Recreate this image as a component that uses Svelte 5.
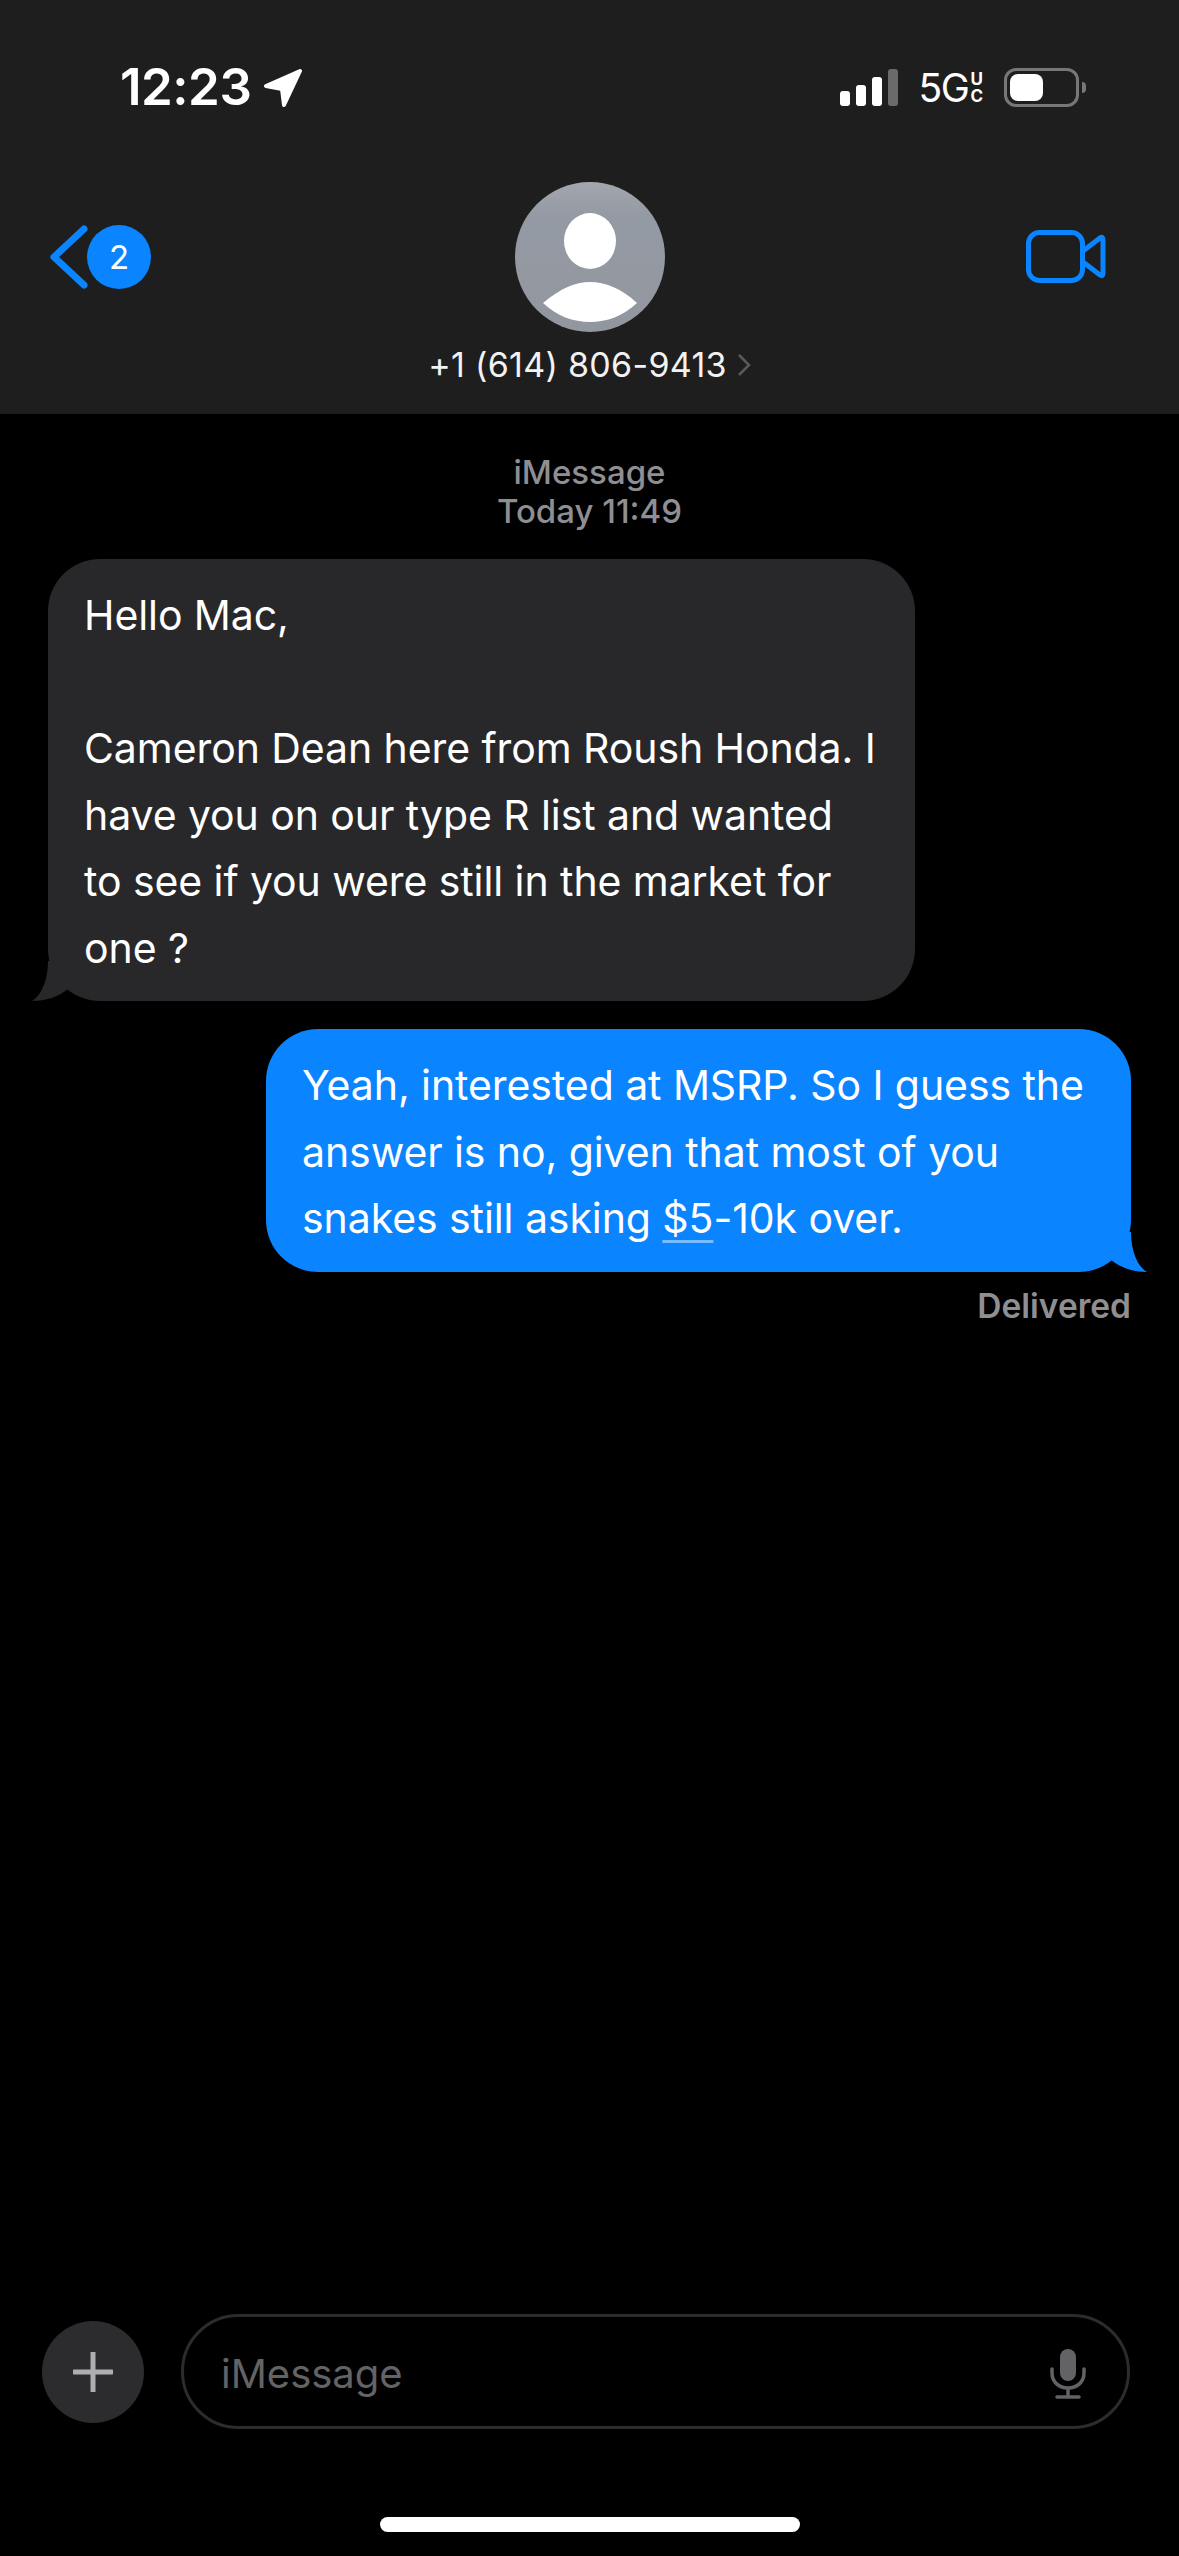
<script>
	const incoming = ['Hello Mac,', '', 'Cameron Dean here from Roush Honda. I', 'have you on our type R list and wanted', 'to see if you were still in the market for', 'one ?'];
	const signal = [15, 21, 29, 37];
</script>

<div class="screen">
	<header class="top">
		<div class="status">
			<div class="clock">
				<span>12:23</span>
				<svg width="39" height="38" viewBox="0 0 39 38"><path d="M37 2 L3 17 L19 20 L21 36 Z" fill="#fff" stroke="#fff" stroke-width="4" stroke-linejoin="round" /></svg>
			</div>
			<div class="indicators">
				<div class="bars">
					{#each signal as h, i}
						<i class:dim={i === 3} style="height:{h}px"></i>
					{/each}
				</div>
				<div class="net">5G<span class="uc"><b>U</b><b>C</b></span></div>
				<div class="battery"><div class="cell"><div class="fill"></div></div><div class="nub"></div></div>
			</div>
		</div>
		<div class="nav">
			<div class="back">
				<svg width="38" height="64" viewBox="0 0 38 64"><path d="M34 4 L4 32 L34 60" fill="none" stroke="#0a84ff" stroke-width="7" stroke-linecap="round" stroke-linejoin="round" /></svg>
				<span class="badge">2</span>
			</div>
			<div class="contact">
				<div class="avatar">
					<svg width="150" height="150" viewBox="0 0 150 150"><ellipse cx="75" cy="59" rx="26" ry="28" fill="#fff" /><path d="M28 121 C 46 106, 60 100, 75 100 C 90 100, 106 106, 122 121 C 108 134, 92 140, 75 140 C 58 140, 42 134, 28 121 Z" fill="#fff" /></svg>
				</div>
				<div class="number">+1 (614) 806-9413<svg width="14" height="24" viewBox="0 0 14 24"><path d="M2 2 L12 12 L2 22" fill="none" stroke="#5a5a5e" stroke-width="2.5" /></svg></div>
			</div>
			<div class="video">
				<svg width="80" height="54" viewBox="0 0 80 54"><rect x="2.5" y="2.5" width="54" height="48" rx="11" fill="none" stroke="#0a84ff" stroke-width="5" /><path d="M57 21 L74 8 Q77 6 77 10 L77 43 Q77 47 74 45 L57 32" fill="none" stroke="#0a84ff" stroke-width="5" stroke-linejoin="round" /></svg>
			</div>
		</div>
	</header>

	<main class="thread">
		<div class="stamp">iMessage<br />Today 11:49</div>
		<div class="bubble them">
			{#each incoming as line}
				<div class="line">{line || '\u00a0'}</div>
			{/each}
			<svg class="tail left" width="40" height="40" viewBox="0 0 40 40"><path d="M16 0 C 16 18, 10 34, 0 40 C 14 40, 26 36, 36 28 C 40 32, 40 32, 40 0 Z" fill="#28282a" /></svg>
		</div>
		<div class="bubble me">
			<div class="line">Yeah, interested at MSRP. So I guess the</div>
			<div class="line">answer is no, given that most of you</div>
			<div class="line">snakes still asking <span class="link">$5</span>-10k over.</div>
			<svg class="tail right" width="40" height="40" viewBox="0 0 40 40"><path d="M24 0 C 24 18, 30 34, 40 40 C 26 40, 14 36, 4 28 C 0 32, 0 32, 0 0 Z" fill="#0a84ff" /></svg>
		</div>
		<div class="delivered">Delivered</div>
	</main>

	<footer class="bottom">
		<div class="composer">
			<div class="plus">
				<svg width="40" height="40" viewBox="0 0 40 40"><path d="M20 1 V39 M1 20 H39" stroke="#aeaeb2" stroke-width="5" stroke-linecap="round" /></svg>
			</div>
			<div class="field">
				<span>iMessage</span>
				<svg width="36" height="50" viewBox="0 0 36 50"><rect x="10" y="0" width="16" height="32" rx="8" fill="#636366" /><path d="M2 20 V24 C2 33 9 39 18 39 C27 39 34 33 34 24 V20 M18 39 V48 M7 48 H29" fill="none" stroke="#636366" stroke-width="3.5" stroke-linecap="round" /></svg>
			</div>
		</div>
		<div class="home"></div>
	</footer>
</div>

<style>
:global(body) { background: #000; }

.screen {
	width: 1179px; height: 2556px;
	display: flex; flex-direction: column;
	background: #000; color: #fff;
	font-family: Inter, "Liberation Sans", sans-serif;
	overflow: hidden;
}

.top { height: 414px; flex-shrink: 0; background: #1e1e1e; }

.status {
	display: flex; justify-content: space-between; align-items: flex-start;
	height: 182px; box-sizing: border-box;
	padding: 66px 93px 0 120px;
}
.clock {
	display: flex; align-items: center; gap: 12px;
	font-size: 51px; font-weight: 600; line-height: 39px; letter-spacing: -.5px;
}
.clock svg { margin-top: 3px; }
.indicators { display: flex; align-items: center; gap: 21px; height: 39px; margin-top: 2px; }
.bars { display: flex; align-items: flex-end; gap: 6px; height: 37px; }
.bars i { display: block; width: 10px; background: #fff; border-radius: 3px; }
.bars i.dim { background: #6a6a6c; }
.net {
	display: flex; align-items: center; gap: 2px;
	font-size: 39px; font-weight: 400; line-height: 39px; letter-spacing: -1.5px;
}
.uc { display: flex; flex-direction: column; gap: 3px; font-size: 17px; line-height: 14px; letter-spacing: 0; }
.uc b { font-weight: 700; }
.battery { display: flex; align-items: center; gap: 3px; }
.cell {
	width: 75px; height: 39px; box-sizing: border-box;
	border: 3px solid #77777a; border-radius: 12px; padding: 3px;
}
.fill { width: 33px; height: 27px; background: #fff; border-radius: 8px; }
.nub { width: 4px; height: 11px; background: #77777a; border-radius: 0 4px 4px 0; }

.nav {
	display: grid; grid-template-columns: 1fr auto 1fr; align-items: start;
	padding: 0 50px;
}
.back { display: flex; align-items: center; margin-top: 43px; }
.badge {
	width: 64px; height: 64px; border-radius: 50%;
	display: flex; align-items: center; justify-content: center;
	background: #0a84ff; font-size: 33px; font-weight: 400; margin-left: -1px;
}
.contact { display: flex; flex-direction: column; align-items: center; }
.avatar {
	width: 150px; height: 150px; border-radius: 50%;
	background: linear-gradient(#a3a6ae, #949aa3 22%, #92969f);
}
.avatar svg { display: block; }
.number {
	display: flex; align-items: center; gap: 10px;
	margin-top: 13px;
	font-size: 34px; line-height: 40px; letter-spacing: .3px; color: #f2f2f2;
}
.video { justify-self: end; margin: 48px 23px 0 0; }
.video svg { display: block; }

.thread {
	flex: 1; display: flex; flex-direction: column;
	padding: 39px 48px 0;
}
.stamp {
	text-align: center; font-size: 33px; line-height: 39px; font-weight: 500; color: #8e8e93;
}
.bubble {
	position: relative; box-sizing: border-box;
	padding: 23px 36px 20px; border-radius: 52px;
	font-size: 41px; line-height: 66.5px; letter-spacing: -.08px;
}
.line { white-space: nowrap; }
.them { width: 867px; margin-top: 28px; background: #28282a; }
.me { width: 865px; margin-top: 28px; align-self: flex-end; background: #0a84ff; }
.link {
	text-decoration: underline; text-decoration-color: rgba(255,255,255,.45);
	text-decoration-thickness: 3px; text-underline-offset: 7px;
}
.tail { position: absolute; bottom: 0; }
.tail.left { left: -16px; }
.tail.right { right: -16px; }
.delivered {
	align-self: flex-end; margin-top: 15px;
	font-size: 33.5px; line-height: 39px; font-weight: 600; color: #8e8e93;
}

.bottom { flex-shrink: 0; padding-bottom: 24px; }
.composer { display: flex; align-items: center; gap: 37px; padding: 0 49px 0 42px; }
.plus {
	width: 102px; height: 102px; border-radius: 50%; background: #2c2c2e;
	display: flex; align-items: center; justify-content: center; flex-shrink: 0;
}
.plus svg { display: block; }
.field {
	flex: 1; height: 115px; box-sizing: border-box;
	display: flex; align-items: center; justify-content: space-between;
	padding: 4px 41px 0 37px;
	border: 3px solid #2c2c2e; border-radius: 58px;
	font-size: 40px; color: #636366;
}
.home {
	width: 420px; height: 15px; margin: 88px auto 0;
	background: #fff; border-radius: 8px;
}
</style>
